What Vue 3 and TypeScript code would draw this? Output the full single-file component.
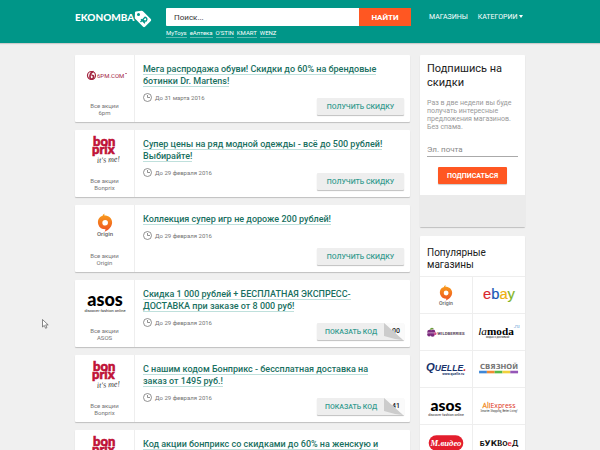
<script setup lang="ts">
import { ref } from 'vue'

interface Offer {
  id: number
  store: string
  logo: string
  title: string
  until: string
  code?: string
}

const offers: Offer[] = [
  { id: 1, store: '6pm', logo: 'sixpm', title: 'Мега распродажа обуви! Скидки до 60% на брендовые ботинки Dr. Martens!', until: 'До 31 марта 2016' },
  { id: 2, store: 'Bonprix', logo: 'bonprix', title: 'Супер цены на ряд модной одежды - всё до 500 рублей! Выбирайте!', until: 'До 29 февраля 2016' },
  { id: 3, store: 'Origin', logo: 'origin', title: 'Коллекция супер игр не дороже 200 рублей!', until: 'До 29 февраля 2016' },
  { id: 4, store: 'ASOS', logo: 'asos', title: 'Скидка 1 000 рублей + БЕСПЛАТНАЯ ЭКСПРЕСС-ДОСТАВКА при заказе от 8 000 руб!', until: 'До 29 февраля 2016', code: '00' },
  { id: 5, store: 'Bonprix', logo: 'bonprix', title: 'С нашим кодом Бонприкс - бессплатная доставка на заказ от 1495 руб.!', until: 'До 29 февраля 2016', code: '41' },
  { id: 6, store: 'Bonprix', logo: 'bonprix', title: 'Код акции бонприкс со скидками до 60% на женскую и', until: 'До 29 февраля 2016' },
]

const quickLinks: string[] = ['MyToys', 'еАптека', "O'STIN", 'KMART', 'WENZ']

const stores: { logo: string; name: string }[] = [
  { logo: 'origin', name: 'Origin' },
  { logo: 'ebay', name: 'eBay' },
  { logo: 'wildberries', name: 'Wildberries' },
  { logo: 'lamoda', name: 'Lamoda' },
  { logo: 'quelle', name: 'Quelle' },
  { logo: 'svyaznoy', name: 'Связной' },
  { logo: 'asos', name: 'ASOS' },
  { logo: 'aliexpress', name: 'AliExpress' },
  { logo: 'mvideo', name: 'М.Видео' },
  { logo: 'bukvoed', name: 'Буквоед' },
]

// Store logos, each drawn in a 48x30 view box
const logos: Record<string, string> = {
  sixpm: `
    <circle cx="10.500" cy="15.500" r="4" fill="#fff" stroke="#a3243f" stroke-width="1.200"/>
    <path d="M12.500 11.500C8.500 12.500 8 19 10.500 19C13 19 13.500 14.800 10.500 15.300" fill="none" stroke="#a3243f" stroke-width="1.700"/>
    <text x="16" y="18" font-family="Roboto, sans-serif" font-size="6" fill="#a3243f">6PM.COM</text>
    <path d="M44 13.500h2" stroke="#a3243f" stroke-width=".6"/>`,
  bonprix: `
    <g font-family="Lato, sans-serif" font-weight="900" font-size="13" fill="#bf1238" stroke="#bf1238" stroke-width=".6">
      <text x="12" y="11">bon</text><text x="11" y="19">prix</text>
    </g>
    <text x="16" y="28" transform="rotate(-4 16 28)" font-family="'Liberation Serif', serif" font-style="italic" font-size="8" fill="#333">it's me!</text>`,
  origin: `
    <defs><linearGradient id="flame" x1="0" y1="0" x2="0" y2="1"><stop offset="0" stop-color="#f9a11b"/><stop offset="1" stop-color="#ee4f23"/></linearGradient></defs>
    <path fill="url(#flame)" fill-rule="evenodd" d="M23.500 3.500C22 4.500 21.600 5.300 21.700 5.800C17.800 6.800 16.200 10.500 17.300 14.500C18.300 17.800 21 19.300 24.500 19.300C24.500 20 24 21 23.600 21.700C27.500 20 31.300 16.500 31.100 12.200C30.900 8.300 27.700 5.600 23.400 5.600C23.300 5 23.300 4.200 23.500 3.500ZM24.200 9.900A2.800 2.800 0 1 1 24.100 15.500A2.800 2.800 0 1 1 24.200 9.900Z"/>
    <text x="24" y="26" text-anchor="middle" font-family="Roboto, sans-serif" font-weight="500" font-size="6" fill="#666">Origin</text>`,
  asos: `
    <text x="24" y="21" text-anchor="middle" font-family="Lato, sans-serif" font-weight="900" font-size="18" fill="#000">asos</text>
    <text x="24" y="27" text-anchor="middle" font-family="Roboto, sans-serif" font-size="4" fill="#222">discover fashion online</text>`,
  ebay: `
    <text x="24" y="20" text-anchor="middle" font-family="'Liberation Sans', sans-serif" font-size="17" stroke-width=".2"><tspan fill="#d9272e" stroke="#d9272e">e</tspan><tspan fill="#1a57b5" stroke="#1a57b5">b</tspan><tspan fill="#efb011" stroke="#efb011">a</tspan><tspan fill="#82b41f" stroke="#82b41f">y</tspan></text>`,
  wildberries: `
    <g fill="#7a2a7d"><circle cx="5" cy="15" r="2.600"/><circle cx="9" cy="14.500" r="2.500"/><circle cx="4.500" cy="18" r="2.200"/><circle cx="8.500" cy="18" r="2.500"/></g>
    <path d="M5 12q2-3 5-1q-2 2-5 1" fill="#6b9c3a"/>
    <circle cx="11.500" cy="17" r="1.600" fill="#d04b8b"/>
    <path d="M3 16h8" stroke="#e6c7e0" stroke-width=".8"/>
    <text x="14" y="18" font-family="Roboto, sans-serif" font-weight="700" font-size="5" fill="#5d4a61">WILDBERRIES</text>`,
  lamoda: `
    <text x="0" y="18" font-family="'Liberation Serif', serif" font-size="13" fill="#000"><tspan font-style="italic">la</tspan><tspan font-weight="700">moda</tspan></text>
    <text x="41" y="10" font-family="'Liberation Serif', serif" font-style="italic" font-size="6" fill="#5b9bd5">.ru</text>
    <text x="9" y="22" font-family="Roboto, sans-serif" font-size="3" fill="#222">модно с доставкой</text>`,
  quelle: `
    <text x="1" y="17" font-family="'Liberation Sans', sans-serif" font-style="italic" font-weight="700" fill="#17326b"><tspan font-size="13">Q</tspan><tspan font-size="10">UELLE</tspan><tspan font-size="12" fill="#df2230">.</tspan></text>
    <text x="45" y="22" text-anchor="end" font-family="Roboto, sans-serif" font-weight="700" font-size="4" fill="#17326b">www.quelle.ru</text>`,
  svyaznoy: `
    <text x="24" y="15" text-anchor="middle" font-family="'DejaVu Sans', sans-serif" font-weight="700" font-size="8" fill="#777">СВЯЗНОЙ</text>
    <path d="M1 18.500h9" stroke="#3f87d6" stroke-width="3"/><path d="M10 18.500h9" stroke="#ef8b33" stroke-width="3"/><path d="M19 18.500h9" stroke="#57b947" stroke-width="3"/><path d="M28 18.500h9" stroke="#f1d13c" stroke-width="3"/><path d="M37 18.500h9" stroke="#9556b7" stroke-width="3"/>`,
  aliexpress: `
    <text x="24" y="17" text-anchor="middle" font-family="'Open Sans', sans-serif" font-size="8"><tspan fill="#f08a1c" stroke="#f08a1c" stroke-width=".3">Ali</tspan><tspan fill="#dd3324">Express</tspan></text>
    <text x="24" y="22" text-anchor="middle" font-family="Roboto, sans-serif" font-size="3" fill="#333">Smarter Shopping, Better Living!</text>`,
  mvideo: `
    <rect x="4" y="6" width="40" height="18" rx="9" fill="#e31e2d"/>
    <text x="24" y="18" text-anchor="middle" font-family="'Liberation Serif', serif" font-style="italic" font-weight="700" font-size="10" fill="#fff">М.видео</text>`,
  bukvoed: `
    <text x="24" y="18" text-anchor="middle" font-weight="700" font-size="9" fill="#111"><tspan font-family="Roboto, sans-serif">Б</tspan><tspan font-family="'DejaVu Sans', sans-serif">У</tspan><tspan font-family="'DejaVu Sans', sans-serif">К</tspan><tspan font-family="'Liberation Serif', serif">В</tspan><tspan font-family="Roboto, sans-serif">О</tspan><tspan font-family="'Liberation Sans', sans-serif" fill="#df2230">е</tspan><tspan font-family="Lato, sans-serif">Д</tspan></text>`,
}

const query = ref('')
const email = ref('')
</script>

<template>
  <div class="page">
    <header class="header">
      <div class="wrap header-row">
        <a class="brand" href="#">
          <span>EKONOMBA</span>
          <svg class="tag" viewBox="0 0 18 18" aria-hidden="true">
            <path fill="#fff" fill-rule="evenodd" d="M2 1.500L7.500.8Q8.500.7 9.200 1.400L16.800 9Q17.700 10 16.800 10.900L11 16.700Q10 17.600 9.100 16.700L1.400 9Q.8 8.400.8 7.400L1 2.500Q1.100 1.600 2 1.500ZM4.500 3A1.500 1.500 0 1 0 4.500 6A1.500 1.500 0 1 0 4.500 3Z" />
            <path d="M6.500 12L11 7.200Q13.800 8.200 12.500 10.500Q11.300 12 9.200 10M7 9.300L11 13.300" fill="none" stroke="#009688" stroke-width="1.300" />
          </svg>
        </a>
        <div class="search">
          <form class="search-form" @submit.prevent>
            <input v-model="query" class="search-input" type="search" placeholder="Поиск..." aria-label="Поиск" />
            <button class="search-button" type="submit">НАЙТИ</button>
          </form>
          <div class="quick">
            <a v-for="link in quickLinks" :key="link" href="#">{{ link }}</a>
          </div>
        </div>
        <nav class="nav">
          <a href="#">МАГАЗИНЫ</a>
          <a href="#">КАТЕГОРИИ
            <svg class="caret" viewBox="0 0 4 3" aria-hidden="true"><path d="M0 0h4L2 3z" fill="#fff" /></svg>
          </a>
        </nav>
      </div>
    </header>

    <div class="wrap content">
      <main class="offers">
        <article v-for="offer in offers" :key="offer.id" class="card offer">
          <a class="offer-store" href="#">
            <svg class="offer-logo" viewBox="0 0 48 30" aria-hidden="true" v-html="logos[offer.logo]"></svg>
            <span>Все акции<br />{{ offer.store }}</span>
          </a>
          <div class="offer-body">
            <h2 class="offer-title"><a href="#">{{ offer.title }}</a></h2>
            <p class="until">
              <svg class="clock" viewBox="0 0 9 9" aria-hidden="true">
                <circle cx="4.500" cy="4.500" r="4" fill="none" stroke="#777" stroke-width=".8" />
                <path d="M4.500 2v2.500H7" fill="none" stroke="#777" stroke-width=".8" />
              </svg>
              {{ offer.until }}
            </p>
            <button v-if="offer.code" class="deal deal-code" type="button">
              <span>ПОКАЗАТЬ КОД</span>
              <span class="code">
                {{ offer.code }}
                <svg class="fold" viewBox="0 0 20 17" aria-hidden="true">
                  <path d="M0 0L19 17H0z" fill="#eee" />
                  <path d="M0 0L19 17Q9 16 0 13z" fill="#ccc" />
                </svg>
              </span>
            </button>
            <button v-else class="deal" type="button">ПОЛУЧИТЬ СКИДКУ</button>
          </div>
        </article>
      </main>

      <aside class="side">
        <section class="card subscribe">
          <form class="subscribe-form" @submit.prevent>
            <h2 class="subscribe-title">Подпишись на скидки</h2>
            <p class="subscribe-text">Раз в две недели вы буде получать интересные предложения магазинов. Без спама.</p>
            <input v-model="email" class="email" type="email" placeholder="Эл. почта" aria-label="Эл. почта" />
            <button class="subscribe-button" type="submit">ПОДПИСАТЬСЯ</button>
          </form>
          <div class="subscribe-foot"></div>
        </section>

        <section class="card popular">
          <h2 class="popular-title">Популярные магазины</h2>
          <div class="grid">
            <a v-for="store in stores" :key="store.logo" class="cell" href="#" :aria-label="store.name">
              <svg class="cell-logo" viewBox="0 0 48 30" aria-hidden="true" v-html="logos[store.logo]"></svg>
            </a>
          </div>
        </section>
      </aside>
    </div>

    <svg class="pointer" viewBox="0 0 7 10" aria-hidden="true">
      <path d="M.5.500V8L2.300 6.400L3.600 9.300L4.900 8.700L3.700 5.900H6.200Z" fill="#fff" stroke="#555" stroke-width=".7" />
    </svg>
  </div>
</template>

<style>
html {
  scrollbar-width: none;
}
body {
  background: #f0f0f0;
}
</style>

<style scoped>
.page,
.page * {
  box-sizing: border-box;
}
.page {
  font-family: Roboto, "Liberation Sans", sans-serif;
  color: #212121;
}
a {
  color: inherit;
  text-decoration: none;
}
button,
input {
  border: 0;
  margin: 0;
  font-family: inherit;
  outline: none;
}
button {
  cursor: pointer;
}
h2,
p {
  margin: 0;
}
.wrap {
  width: 75%;
  margin: 0 auto;
}
.header {
  background: #009688;
  color: #fff;
  box-shadow: 0 1px 1px rgba(0, 0, 0, 0.15);
}
.header-row {
  display: flex;
  align-items: flex-start;
  padding: 8px 0 5px;
}
.brand {
  display: flex;
  align-items: center;
  width: 91px;
  padding-top: 2px;
  font: 900 10px/14px Lato, sans-serif;
}
.brand span {
  padding-bottom: 4px;
}
.tag {
  width: 18px;
  height: 18px;
}
.search {
  flex: 1;
}
.search-form {
  display: flex;
}
.search-input {
  flex: 1;
  min-width: 0;
  height: 18px;
  padding: 0 8px;
  background: #fff;
  border-radius: 1px 0 0 1px;
  font-size: 8px;
  appearance: none;
}
.search-input::placeholder {
  color: #333;
}
.search-button {
  width: 52px;
  height: 18px;
  padding: 0;
  background: #ff5722;
  color: #fff;
  font-size: 8px;
  font-weight: 700;
}
.quick {
  display: flex;
  gap: 3px;
  padding-top: 3px;
  font-size: 6px;
  line-height: 8px;
}
.quick a {
  border-bottom: 1px solid #5dbab1;
}
.nav {
  display: flex;
  gap: 10px;
  width: 114px;
  padding-left: 18px;
  font-size: 7px;
  line-height: 18px;
  white-space: nowrap;
}
.caret {
  width: 4px;
  height: 3px;
  vertical-align: 1px;
}
.content {
  display: flex;
  align-items: flex-start;
  gap: 10px;
  padding: 12px 0 20px;
}
.offers {
  flex: 1;
  display: grid;
  gap: 8px;
}
.card {
  background: #fff;
  border-radius: 1px;
  box-shadow: 0 1px 1px rgba(0, 0, 0, 0.2);
}
.offer {
  display: flex;
  min-height: 67px;
}
.offer-store {
  display: flex;
  flex-direction: column;
  align-items: center;
  justify-content: space-between;
  width: 60px;
  padding: 5px 0 6px;
  border-right: 1px solid #eee;
  color: #757575;
  font-size: 6px;
  line-height: 7px;
  text-align: center;
}
.offer-logo {
  width: 48px;
  height: 30px;
}
.offer-body {
  flex: 1;
  display: grid;
  grid-template-rows: auto 1fr;
  grid-template-columns: 1fr auto;
  padding: 8px 6px 7px 8px;
}
.offer-title {
  grid-column: 1 / -1;
  padding-right: 16px;
  color: #19705f;
  font-size: 9px;
  font-weight: 500;
  line-height: 12px;
}
.offer-title a {
  border-bottom: 1px solid #bfe0dc;
}
.until {
  display: flex;
  align-items: center;
  align-self: start;
  gap: 3px;
  padding-top: 6px;
  color: #757575;
  font-size: 6px;
  line-height: 9px;
}
.clock {
  width: 9px;
  height: 9px;
}
.deal {
  align-self: end;
  width: 87px;
  height: 17px;
  padding: 0;
  border-radius: 1px;
  background: #eee;
  box-shadow: 0 1px 1px rgba(0, 0, 0, 0.25);
  color: #349b8f;
  font-size: 7px;
  font-weight: 500;
}
.deal-code {
  display: flex;
  align-items: center;
  justify-content: space-between;
  padding-left: 8px;
}
.code {
  position: relative;
  width: 20px;
  height: 17px;
  padding-right: 4px;
  background: #fafafa;
  color: #222;
  line-height: 17px;
  text-align: right;
}
.fold {
  position: absolute;
  inset: 0;
  width: 20px;
  height: 17px;
}
.side {
  width: 105px;
  display: grid;
  grid-template-columns: minmax(0, 1fr);
  gap: 9px;
}
.subscribe-form {
  display: flex;
  flex-direction: column;
  padding: 7px 7px 11px;
}
.subscribe-title {
  font-size: 11px;
  font-weight: 400;
  line-height: 14px;
}
.subscribe-text {
  padding-top: 9px;
  color: #999;
  font-size: 7px;
  line-height: 8px;
}
.email {
  width: 100%;
  height: 14px;
  margin-top: 12px;
  padding: 0;
  border-bottom: 1px solid #aaa;
  background: none;
  font-size: 8px;
}
.email::placeholder {
  color: #888;
}
.subscribe-button {
  align-self: center;
  width: 69px;
  height: 17px;
  margin-top: 10px;
  padding: 0;
  border-radius: 1px;
  background: #ff5722;
  box-shadow: 0 1px 1px rgba(0, 0, 0, 0.2);
  color: #fff;
  font-size: 7px;
  font-weight: 700;
}
.subscribe-foot {
  height: 32px;
  background: #ebebeb;
}
.popular-title {
  padding: 11px 7px 5px;
  font-size: 10px;
  font-weight: 400;
  line-height: 12px;
}
.grid {
  display: grid;
  grid-template-columns: 1fr 1fr;
}
.cell {
  display: flex;
  align-items: center;
  justify-content: center;
  height: 37px;
  border-top: 1px solid #eee;
}
.cell:nth-child(odd) {
  border-right: 1px solid #eee;
}
.cell-logo {
  width: 42px;
  height: 26px;
}
.pointer {
  position: fixed;
  top: 319px;
  left: 42px;
  width: 7px;
  height: 10px;
  pointer-events: none;
}
</style>
